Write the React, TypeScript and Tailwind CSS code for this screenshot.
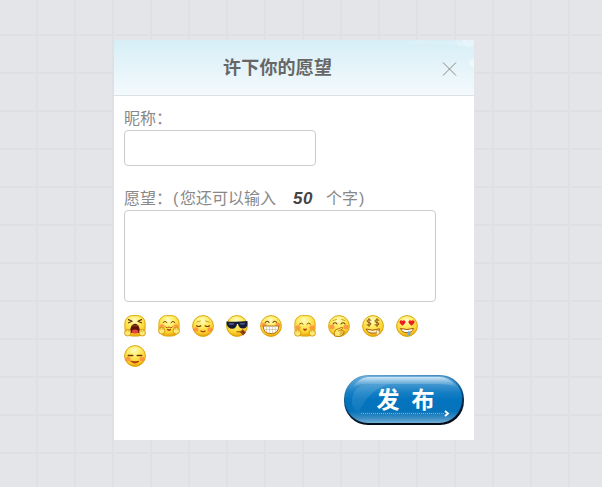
import React from "react";

type Mood =
  | "scream"
  | "hug"
  | "shy"
  | "cool"
  | "grin"
  | "cuddle"
  | "giggle"
  | "money"
  | "love"
  | "smile";

const moods: Mood[] = ["scream", "hug", "shy", "cool", "grin", "cuddle", "giggle", "money", "love", "smile"];

const stroke = { fill: "none", strokeLinecap: "round" as const, strokeLinejoin: "round" as const };

function Cheeks({ y = 14 }: { y?: number }) {
  return (
    <g fill="#ff8345" opacity="0.75">
      <ellipse cx="4" cy={y} rx="2.6" ry="2.2" />
      <ellipse cx="18" cy={y} rx="2.6" ry="2.2" />
    </g>
  );
}

function Hands({ y = 17.5 }: { y?: number }) {
  return (
    <g fill="#ffe873" stroke="#cf9710" strokeWidth="0.9">
      <rect x="0.7" y={y - 3} width="6" height="6.4" rx="2.6" />
      <rect x="15.3" y={y - 3} width="6" height="6.4" rx="2.6" />
      <path d={`M2.8 ${y - 2.6}v2M4.8 ${y - 2.6}v2M17.2 ${y - 2.6}v2M19.2 ${y - 2.6}v2`} strokeWidth="0.6" />
    </g>
  );
}

function Features({ mood }: { mood: Mood }) {
  switch (mood) {
    case "scream":
      return (
        <>
          <path d="M4.5 4.6l3.6 1.7-3.6 1.5M17.5 4.6l-3.6 1.7 3.6 1.5" {...stroke} stroke="#6b3205" strokeWidth="1.2" />
          <path d="M11 8.8c3.2 0 5 3.8 5 9.2H6c0-5.4 1.8-9.2 5-9.2z" fill="#611208" />
          <path d="M7.5 10.8h7" stroke="#a05a18" strokeWidth="0.8" />
          <ellipse cx="11" cy="16.6" rx="3.2" ry="2" fill="#e8443c" />
          <Hands />
        </>
      );
    case "hug":
      return (
        <>
          <path d="M5 7.5q2-2.6 4 0M13 7.5q2-2.6 4 0" {...stroke} stroke="#7a4208" strokeWidth="1" />
          <Cheeks y={11.5} />
          <path d="M7.5 12q1.7 1.8 3.5 0 1.8 1.8 3.5 0M9.2 14.8q1.8 2.2 3.6 0z" {...stroke} stroke="#ac4b0b" strokeWidth="0.9" />
          <Hands y={15.5} />
        </>
      );
    case "shy":
      return (
        <>
          <path d="M5 7l3.4-1M13.6 6l3.4 1" {...stroke} stroke="#c18b1a" strokeWidth="0.8" />
          <path d="M4.5 10.8q2.2 1.5 4.3 0M13.2 10.8q2.2 1.5 4.3 0" {...stroke} stroke="#743604" strokeWidth="1.1" />
          <Cheeks y={14.5} />
          <path d="M9 16q2 1.5 4 0" {...stroke} stroke="#a93806" strokeWidth="1.2" />
        </>
      );
    case "cool":
      return (
        <>
          <path d="M.5 6.5Q11 7.2 21.5 6v3.500q-.8 4-4.500 4-4 0-5-4.500h-1q-.8 4.700-4.600 4.700Q2 13.700.5 9z" fill="#161c35" />
          <path d="M2.5 8h6l-1.3 2H3.5zM13.5 8h6l-1.2 1.8h-3.7z" fill="#465281" />
          <path d="M11 16.8h4" {...stroke} stroke="#88460a" strokeWidth="1" />
          <path d="M14 17l2.5-2.8 3.5 3-3 3.6z" fill="#984912" />
          <path d="M16.5 16.3l2 1.8" stroke="#552409" strokeWidth="1" />
        </>
      );
    case "grin":
      return (
        <>
          <path d="M5.3 7.500q1.700-2.500 3.700-.2M13 7.300q2-2.300 3.700.2" {...stroke} stroke="#7d4307" strokeWidth="1.1" />
          <Cheeks y={10} />
          <path d="M3.2 11h15.6q-.2 7.600-7.8 7.600T3.200 11z" fill="#fff" stroke="#a8640a" strokeWidth="0.9" />
          <path d="M3.8 14.500h14.400M6.600 11.500v5.500M9.500 11.500v7M12.500 11.500v7M15.400 11.500v5.500" stroke="#c9b798" strokeWidth="0.6" />
        </>
      );
    case "cuddle":
      return (
        <>
          <path d="M5.5 9q1.8-2 3.600 0M12.900 9q1.800-2 3.600 0" {...stroke} stroke="#8b4a0b" strokeWidth="1" />
          <Cheeks y={12.5} />
          <path d="M9 13.500q2 .6 4 0-.3 2.200-2 2.200t-2-2.200z" fill="#b63110" />
          <Hands y={17.7} />
        </>
      );
    case "giggle":
      return (
        <>
          <path d="M5 5.500l3.500-1M13.500 4.500l3.500 1" {...stroke} stroke="#c18b1a" strokeWidth="0.8" />
          <path d="M5 9q2-2.500 4 0M13 9q2-2.500 4 0" {...stroke} stroke="#7b4108" strokeWidth="1.1" />
          <Cheeks y={12} />
          <path d="M6.500 21q-1-3.700 1.200-6.200l6.500-2.500q1.200.4.300 1.500L12.800 15q4 .2 3.200 2.700-.9 3.500-5 3.800z" fill="#ffe870" stroke="#b97b0b" strokeWidth="1" />
          <path d="M12.800 15l-2.500 1M15.800 17h-3.500M15 19h-3" {...stroke} stroke="#b97b0b" strokeWidth="0.8" />
        </>
      );
    case "money":
      return (
        <>
          <g {...stroke} stroke="#90500c" strokeWidth="1">
            <path d="M8.900 5.200Q5 4 5 6.100q0 1.300 2 1.400 2 .2 2 1.600-.2 1.900-4 .8M7 3.500v8" />
            <path d="M16.900 5.200Q13 4 13 6.100q0 1.300 2 1.400 2 .2 2 1.600-.2 1.900-4 .8M15 3.500v8" />
          </g>
          <path d="M4 14q7 2.500 13.500-.2-.7 4.400-6.500 4.400-5.300 0-7-4.200z" fill="#fff1cb" stroke="#a25f0c" strokeWidth="1" />
          <path d="M14.500 15.500h2.500v3.500q-1.200 1.500-2.500 0z" fill="#fff5d7" stroke="#bd842a" strokeWidth="0.5" />
        </>
      );
    case "love":
      return (
        <>
          <path d="M6.500 10.700Q2.800 8 3.600 6.300q1.500-2 2.900-.2Q8 4.300 9.400 6.300q.8 1.700-2.900 4.400zM15.500 10.700Q11.800 8 12.600 6.300q1.500-2 2.900-.2 1.500-1.800 2.900.2.800 1.700-2.900 4.400z" fill="#ed1b24" />
          <path d="M4.500 13.500q6.500 2 13-.1-1.200 4.300-6.500 4.300-4.900 0-6.500-4.200z" fill="#fff" stroke="#a5590b" strokeWidth="1" />
          <path d="M12.800 15.500q2.700 2.800 1.200 4.700-1.500 1-2.400-.8-.2-1.600 1.200-3.900z" fill="#5faee5" />
        </>
      );
    default:
      return (
        <>
          <path d="M4.300 10.500h4.400M13.300 10.500h4.400" {...stroke} stroke="#713603" strokeWidth="1.6" />
          <Cheeks />
          <path d="M7 16.300q4 3.500 8 0-4 .9-8 0z" {...stroke} fill="#ae350d" stroke="#ae350d" strokeWidth="0.8" />
        </>
      );
  }
}

function Emoji({ mood }: { mood: Mood }) {
  const square = mood === "scream" || mood === "hug" || mood === "cuddle";
  const id = `face-${mood}`;
  return (
    <svg width="22" height="22" viewBox="0 0 22 22" className="block" aria-label={mood}>
      <defs>
        <radialGradient id={id} cx="46%" cy="24%" r="78%">
          <stop offset="0" stopColor="#fffbc4" />
          <stop offset="0.35" stopColor="#ffee68" />
          <stop offset="0.75" stopColor="#fdd02c" />
          <stop offset="1" stopColor="#e69b08" />
        </radialGradient>
      </defs>
      {square ? (
        <rect x="0.9" y="0.6" width="20.2" height="20.5" rx="7.5" fill={`url(#${id})`} stroke="#dcab10" />
      ) : (
        <circle cx="11" cy="11" r="10.4" fill={`url(#${id})`} stroke="#d9a60c" />
      )}
      <Features mood={mood} />
    </svg>
  );
}

function PublishButton() {
  return (
    <button className="relative block h-[50px] w-[120px]">
      <svg className="absolute inset-0" width="120" height="50" viewBox="0 0 120 50">
        <defs>
          <linearGradient id="rim" x1="0" y1="0" x2="0.25" y2="1">
            <stop offset="0" stopColor="#6aa8d2" />
            <stop offset="0.5" stopColor="#0e5e98" />
            <stop offset="0.8" stopColor="#04223d" />
            <stop offset="1" stopColor="#020c18" />
          </linearGradient>
          <linearGradient id="blue" x1="0" y1="0" x2="0" y2="1">
            <stop offset="0" stopColor="#6bafdc" />
            <stop offset="0.14" stopColor="#4a9bd1" />
            <stop offset="0.35" stopColor="#167fc4" />
            <stop offset="0.5" stopColor="#0474bf" />
            <stop offset="0.75" stopColor="#0673ba" />
            <stop offset="0.9" stopColor="#3d8ec4" />
            <stop offset="1" stopColor="#74b0d8" />
          </linearGradient>
          <linearGradient id="gloss" x1="0" y1="0" x2="0" y2="1">
            <stop offset="0" stopColor="#e9f5fd" stopOpacity="0.8" />
            <stop offset="1" stopColor="#8fc6e9" stopOpacity="0" />
          </linearGradient>
          <linearGradient id="side" x1="0" y1="0" x2="0" y2="1">
            <stop offset="0" stopColor="#75b6de" stopOpacity="0.35" />
            <stop offset="1" stopColor="#75b6de" stopOpacity="0.08" />
          </linearGradient>
        </defs>
        <rect width="120" height="50" rx="24" fill="url(#rim)" />
        <rect x="1" y="1" width="117" height="47" rx="23" fill="url(#blue)" />
        <path d="M24 2h71q10 0 17 9-10-2-20-2H28Q18 8 8 13 14 3 24 2z" fill="url(#gloss)" />
        <path d="M8 29Q7 11 25 8q13-1 26-1-28 7-36 31Q10 36 8 29z" fill="url(#side)" />
        <path d="M17 38.5h84" stroke="#73b2dc" strokeWidth="1" strokeDasharray="1 1" />
        <path d="M101 36l3 2.5-3 2.5" fill="none" stroke="#fff" strokeWidth="1.8" />
      </svg>
      <span className="relative flex h-full items-center justify-center gap-3 pb-px pl-[3px] text-[23px] leading-[26px] font-bold text-white">
        <span>发</span>
        <span>布</span>
      </span>
    </button>
  );
}

export default function App() {
  return (
    <main className="h-[487px] w-[602px] overflow-hidden bg-[#e4e5e9] bg-[linear-gradient(to_right,#dfe0e4_2px,transparent_2px),linear-gradient(to_bottom,#dfe0e4_2px,transparent_2px)] bg-[length:38px_38px] bg-[position:36px_34px] pt-10 pl-[114px] font-['Liberation_Sans','Noto_Sans_CJK_SC',sans-serif]">
      <section className="h-[400px] w-[360px] bg-white">
        <header className="relative flex h-14 items-center border-b border-[#dde0e4] bg-linear-to-b from-[#d6eef6] to-[#f4fafd] pl-[109px]">
          <svg className="absolute top-0 right-0" width="72" height="32" viewBox="0 0 72 32">
            <g fill="#fff">
              <path d="M0 5q18-8 31-3l41-2v9Q48 1 0 5z" opacity="0.12" />
              <circle cx="59" cy="1" r="5" opacity="0.2" />
              <circle cx="67" cy="1" r="6" opacity="0.28" />
              <circle cx="71" cy="23" r="4" opacity="0.4" />
            </g>
          </svg>
          <h1 className="w-[109px] text-[18px] leading-[18px] font-bold tracking-[0.2px] whitespace-nowrap text-[#666]">许下你的愿望</h1>
          <button className="mt-[2px] ml-[110px]" aria-label="关闭">
            <svg width="15" height="14" viewBox="0 0 15 14">
              <path d="M1 .5l13 13M14 .5l-13 13" stroke="#8e8884" strokeWidth="1" />
            </svg>
          </button>
        </header>
        <div className="flex flex-col px-[10px] pt-[15px] text-[16px] leading-4 text-[#888]">
          <label htmlFor="nick">昵称：</label>
          <input id="nick" className="mt-[3px] h-9 w-48 rounded border border-[#ccc] bg-white px-2 outline-none" />
          <div className="mt-[25px] flex h-4 items-center whitespace-nowrap">
            <span>愿望：</span>
            <span className="w-2 pl-px">(</span>
            <span>您还可以输入</span>
            <strong className="ml-[17px] w-[21px] font-['Liberation_Sans'] text-[17px] leading-4 tracking-[0.5px] text-[#444] italic">50</strong>
            <span className="ml-3">个字</span>
            <span className="pl-px">)</span>
          </div>
          <textarea className="mt-[3px] h-[92px] w-[312px] resize-none rounded border border-[#ccc] bg-white p-2 outline-none" />
          <div className="mt-[13px] flex w-[320px] flex-wrap gap-x-3 gap-y-2">
            {moods.map((mood) => (
              <Emoji key={mood} mood={mood} />
            ))}
          </div>
          <div className="mt-2 flex justify-end">
            <PublishButton />
          </div>
        </div>
      </section>
    </main>
  );
}
